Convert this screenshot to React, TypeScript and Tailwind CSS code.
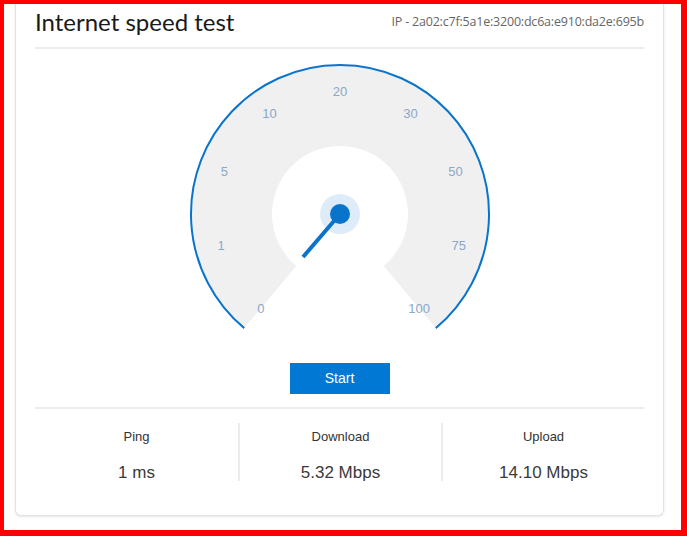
import React from "react";

const CX = 152;
const CY = 152;
const labels = ["0", "1", "5", "10", "20", "30", "50", "75", "100"];

function pt(r: number, deg: number) {
  const a = (deg * Math.PI) / 180;
  return { x: CX + r * Math.sin(a), y: CY - r * Math.cos(a) };
}

function Gauge() {
  const o1 = pt(148, -140);
  const o2 = pt(148, 140);
  const i1 = pt(68, -140);
  const i2 = pt(68, 140);
  const b1 = pt(149, -140);
  const b2 = pt(149, 140);
  const sector = `M ${o1.x} ${o1.y} A 148 148 0 1 1 ${o2.x} ${o2.y} L ${i2.x} ${i2.y} A 68 68 0 1 0 ${i1.x} ${i1.y} Z`;
  const arc = `M ${b1.x} ${b1.y} A 149 149 0 1 1 ${b2.x} ${b2.y}`;
  return (
    <svg width="304" height="270" viewBox="0 0 304 270" className="block">
      <path d={sector} fill="#f0f0f0" />
      <path d={arc} fill="none" stroke="#0a74cc" strokeWidth="2" />
      {labels.map((l, i) => {
        const p = pt(123, -140 + 35 * i);
        return (
          <text
            key={l}
            x={p.x}
            y={p.y}
            textAnchor="middle"
            dominantBaseline="central"
            fontSize="13"
            fill="#8ba7c9"
            fontFamily="'Liberation Sans', Arial, sans-serif"
          >
            {l}
          </text>
        );
      })}
      <circle cx={CX} cy={CY} r="20" fill="#deecf9" />
      <line x1={CX} y1={CY} x2={115} y2={195} stroke="#0a74cc" strokeWidth="4" />
      <circle cx={CX} cy={CY} r="10" fill="#0a74cc" />
    </svg>
  );
}

function Stat({ label, value, first }: { label: string; value: string; first?: boolean }) {
  return (
    <div className="flex-1 flex">
      {!first && <div className="w-[2px] h-[58px] bg-[#ececec]" />}
      <div className="flex-1 flex flex-col items-center">
        <div className="mt-[6px] text-[13px] leading-[15px] text-[#333]">{label}</div>
        <div className="mt-[19px] text-[17px] leading-[20px] text-[#3a3a3a]">{value}</div>
      </div>
    </div>
  );
}

export default function App() {
  return (
    <div
      className="w-[687px] h-[536px] box-border border-[#ff0000] border-l-4 border-t-4 border-r-[6px] border-b-[6px] bg-white flex flex-col overflow-hidden"
      style={{ fontFamily: "'Liberation Sans', Arial, sans-serif" }}
    >
      <div className="flex-1 ml-[11px] mr-[17px] mb-[14px] border-x border-b border-[#e2e2e2] rounded-b-md shadow-[0_1px_3px_rgba(0,0,0,0.10)] px-[19px] flex flex-col">
        <div className="h-[43px] flex justify-between items-start">
          <div
            className="mt-[4px] text-[24px] leading-[28px] text-[#1a1a1a]"
            style={{ fontFamily: "Lato, 'Open Sans', sans-serif" }}
          >
            Internet speed test
          </div>
          <div
            className="mt-[9px] text-[12.5px] tracking-[-0.2px] leading-[18px] text-[#666]"
            style={{ fontFamily: "'Open Sans', 'Noto Sans', sans-serif" }}
          >
            IP - 2a02:c7f:5a1e:3200:dc6a:e910:da2e:695b
          </div>
        </div>
        <div className="h-[2px] bg-[#ececec]" />
        <div className="mt-[13px] flex justify-center">
          <Gauge />
        </div>
        <div className="mt-[31px] flex justify-center">
          <button className="w-[100px] h-[31px] bg-[#0078d4] text-white text-[14px]">Start</button>
        </div>
        <div className="mt-[13px] h-[2px] bg-[#ececec]" />
        <div className="mt-[14px] flex">
          <Stat label="Ping" value="1 ms" first />
          <Stat label="Download" value="5.32 Mbps" />
          <Stat label="Upload" value="14.10 Mbps" />
        </div>
      </div>
    </div>
  );
}
